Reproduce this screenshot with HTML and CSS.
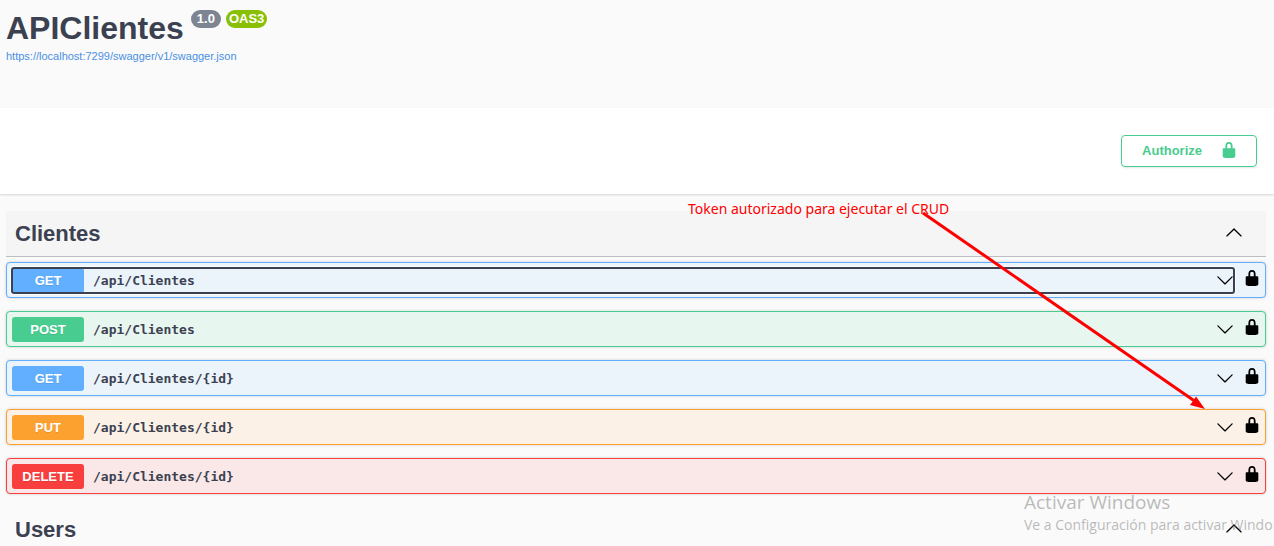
FILE: index.html
```html
<!DOCTYPE html>
<html lang="es">
<head>
<meta charset="utf-8">
<title>APIClientes</title>
<link rel="stylesheet" href="styles.css">
</head>
<body>
<svg class="defs" width="0" height="0" aria-hidden="true">
  <symbol id="lock" viewBox="0 0 20 20"><path d="M15.8 8H14V5.6C14 2.703 12.665 1 10 1 7.334 1 6 2.703 6 5.6V8H4c-.553 0-1 .646-1 1.199V17c0 .549.428 1.139.951 1.307l1.197.387C5.672 18.861 6.55 19 7.1 19h5.8c.549 0 1.428-.139 1.951-.307l1.196-.387c.524-.167.953-.757.953-1.306V9.199C17 8.646 16.352 8 15.8 8zM12 8H8V5.199C8 3.754 8.797 3 10 3c1.203 0 2 .754 2 2.199V8z"/></symbol>
  <symbol id="down" viewBox="0 0 20 20"><path d="M17.418 6.109c.272-.268.709-.268.979 0s.271.701 0 .969l-7.908 7.83c-.27.268-.707.268-.979 0l-7.908-7.83c-.27-.268-.27-.701 0-.969.271-.268.709-.268.979 0L10 13.25l7.418-7.141z"/></symbol>
  <symbol id="up" viewBox="0 0 20 20"><path d="M17.418 14.908c.272.27.709.27.979 0s.271-.701 0-.969l-7.908-7.83c-.27-.268-.707-.268-.979 0l-7.908 7.83c-.27.268-.27.701 0 .969.271.27.709.27.979 0L10 7.767l7.418 7.141z"/></symbol>
</svg>
<header class="info">
  <div class="title-row">
    <h1 class="title">APIClientes</h1>
    <div class="badges">
      <span class="badge">1.0</span>
      <span class="badge badge-oas">OAS3</span>
    </div>
  </div>
  <a class="spec-link" href="#">https://localhost:7299/swagger/v1/swagger.json</a>
</header>
<section class="scheme">
  <button class="authorize" type="button">Authorize
    <svg class="lock"><use href="#lock"/></svg>
  </button>
</section>
<main class="operations">
  <section>
    <h2 class="tag tag-hover">Clientes
      <button class="icon-btn" type="button" aria-label="Contraer Clientes"><svg class="arrow"><use href="#up"/></svg></button>
    </h2>
    <div class="list">
      <div class="op get">
        <button class="summary focused" type="button"><span class="method">GET</span><span class="path">/api/Clientes</span><svg class="arrow"><use href="#down"/></svg></button>
        <button class="icon-btn" type="button" aria-label="Autorización"><svg class="lock"><use href="#lock"/></svg></button>
      </div>
      <div class="op post">
        <button class="summary" type="button"><span class="method">POST</span><span class="path">/api/Clientes</span><svg class="arrow"><use href="#down"/></svg></button>
        <button class="icon-btn" type="button" aria-label="Autorización"><svg class="lock"><use href="#lock"/></svg></button>
      </div>
      <div class="op get">
        <button class="summary" type="button"><span class="method">GET</span><span class="path">/api/Clientes/{id}</span><svg class="arrow"><use href="#down"/></svg></button>
        <button class="icon-btn" type="button" aria-label="Autorización"><svg class="lock"><use href="#lock"/></svg></button>
      </div>
      <div class="op put">
        <button class="summary" type="button"><span class="method">PUT</span><span class="path">/api/Clientes/{id}</span><svg class="arrow"><use href="#down"/></svg></button>
        <button class="icon-btn" type="button" aria-label="Autorización"><svg class="lock"><use href="#lock"/></svg></button>
      </div>
      <div class="op delete">
        <button class="summary" type="button"><span class="method">DELETE</span><span class="path">/api/Clientes/{id}</span><svg class="arrow"><use href="#down"/></svg></button>
        <button class="icon-btn" type="button" aria-label="Autorización"><svg class="lock"><use href="#lock"/></svg></button>
      </div>
    </div>
  </section>
  <section>
    <h2 class="tag">Users
      <button class="icon-btn" type="button" aria-label="Contraer Users"><svg class="arrow"><use href="#up"/></svg></button>
    </h2>
  </section>
</main>
<p class="note">Token autorizado para ejecutar el CRUD</p>
<svg class="pointer" width="290" height="206" viewBox="0 0 290 206" aria-hidden="true">
  <path d="M4 6L277 195" stroke="#f00" stroke-width="3" fill="none"/>
  <path d="M286 202L271 198L274 194L277 189.500Z" fill="#f00"/>
</svg>
<div class="watermark">
  <p class="watermark-title">Activar Windows</p>
  <p class="watermark-text">Ve a Configuración para activar Windo</p>
</div>
</body>
</html>
```
FILE: styles.css
```css
* { box-sizing: border-box; }

body {
  margin: 0;
  background: #fafafa;
  color: #3b4151;
  font-family: "Liberation Sans", Arial, sans-serif;
  overflow: hidden;
}

button {
  font: inherit;
  color: inherit;
  background: none;
  border: 0;
  padding: 0;
  cursor: pointer;
}

.defs { position: absolute; }

.info { padding: 9px 6px 43px; }

.title-row {
  display: flex;
  align-items: flex-start;
  gap: 7px;
}

.title {
  margin: 0;
  font-size: 32px;
  line-height: 39px;
}

.badges {
  display: flex;
  gap: 5px;
  padding-top: 1px;
}

.badge {
  padding: 0 6px;
  border-radius: 9px;
  background: #7d8492;
  color: #fff;
  font-size: 13px;
  font-weight: bold;
  line-height: 18px;
}

.badge-oas {
  background: #89bf04;
  padding: 0 3px;
}

.spec-link {
  display: block;
  width: max-content;
  color: #4990e2;
  font-size: 11px;
  line-height: 17px;
  text-decoration: none;
}

.scheme {
  display: flex;
  justify-content: flex-end;
  padding: 27px 17px;
  background: #fff;
  box-shadow: 0 1px 2px rgba(0, 0, 0, .15);
}

.authorize {
  display: flex;
  align-items: center;
  gap: 18px;
  height: 32px;
  padding: 0 18px 2px 20px;
  border: 1px solid #49cc90;
  border-radius: 4px;
  box-shadow: 0 1px 2px rgba(0, 0, 0, .1);
  color: #49cc90;
  font-size: 13px;
  font-weight: bold;
}

.lock, .arrow {
  display: block;
  flex: none;
  width: 18px;
  height: 18px;
  fill: currentColor;
}

.operations { padding: 17px 8px 0 6px; }

.tag {
  display: flex;
  align-items: center;
  justify-content: space-between;
  height: 46px;
  margin: 0;
  padding: 0 23px 0 9px;
  border-bottom: 1px solid rgba(59, 65, 81, .3);
  font-size: 22px;
}

.tag-hover { background: rgba(0, 0, 0, .02); }

.tag .icon-btn {
  color: #000;
  padding-bottom: 4px;
}

.list {
  display: grid;
  gap: 13px;
  padding: 5px 0 13px;
}

.op {
  display: flex;
  align-items: center;
  height: 36px;
  padding: 0 4px 0 5px;
  border: 1px solid var(--accent);
  border-radius: 4px;
  box-shadow: 0 0 3px rgba(0, 0, 0, .19);
  background: var(--tint);
}

.op .icon-btn {
  color: #000;
  padding-bottom: 4px;
}

.get { --accent: #61affe; --tint: #ebf3fb; }
.post { --accent: #49cc90; --tint: #e8f6f0; }
.put { --accent: #fca130; --tint: #fbf1e6; }
.delete { --accent: #f93e3e; --tint: #fae7e7; }

.summary {
  display: flex;
  flex: 1;
  align-items: center;
  margin-right: 9px;
  text-align: left;
  color: #3b4151;
}

.summary .arrow { color: #000; }

.focused {
  border-radius: 2px;
  outline: 2px solid #3b4151;
  outline-offset: -1px;
  box-shadow: 0 0 0 2px #fff;
}

.method {
  width: 72px;
  border-radius: 3px;
  background: var(--accent);
  color: #fff;
  font-size: 13px;
  font-weight: bold;
  line-height: 25px;
  text-align: center;
  text-shadow: 0 1px 0 rgba(0, 0, 0, .1);
}

.path {
  flex: 1;
  padding-left: 9px;
  font-family: "DejaVu Sans Mono", monospace;
  font-size: 13px;
  font-weight: bold;
}

.note {
  position: absolute;
  left: 688px;
  top: 199px;
  margin: 0;
  color: #f00;
  font-family: "Noto Sans", sans-serif;
  font-size: 14px;
  line-height: 19px;
  white-space: nowrap;
}

.pointer {
  position: absolute;
  left: 919px;
  top: 207px;
  pointer-events: none;
}

.watermark {
  position: absolute;
  left: 1024px;
  top: 490px;
  color: rgba(120, 120, 120, .5);
  font-family: "Open Sans", sans-serif;
  white-space: nowrap;
  pointer-events: none;
}

.watermark p { margin: 0; }
.watermark-title { font-size: 19px; line-height: 25px; }
.watermark-text { font-size: 14px; line-height: 20px; }
```
